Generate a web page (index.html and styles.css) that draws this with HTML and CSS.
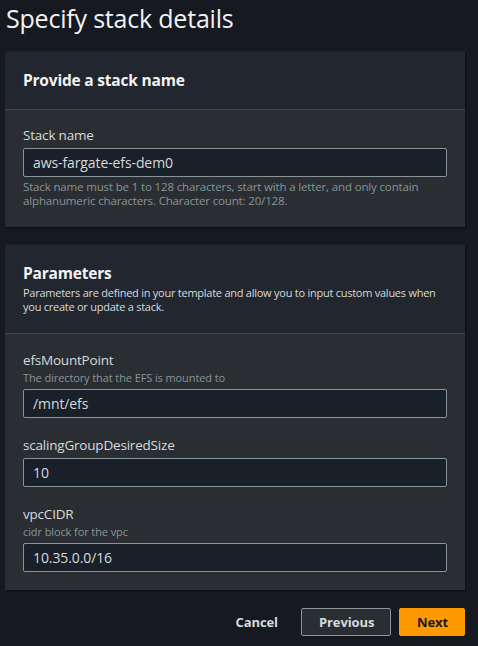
FILE: index.html
```html
<!DOCTYPE html>
<html>
<head>
<meta charset="utf-8">
<link rel="stylesheet" href="styles.css">
</head>
<body>
<div class="page">
  <h1 class="title">Specify stack details</h1>

  <section class="card">
    <div class="card-header">
      <h2 class="card-title">Provide a stack name</h2>
    </div>
    <div class="card-body first">
      <div class="field">
        <label class="label">Stack name</label>
        <div class="input">aws-fargate-efs-dem0</div>
        <p class="constraint">Stack name must be 1 to 128 characters, start with a letter, and only contain alphanumeric characters. Character count: 20/128.</p>
      </div>
    </div>
  </section>

  <section class="card">
    <div class="card-header params">
      <h2 class="card-title">Parameters</h2>
      <p class="card-desc">Parameters are defined in your template and allow you to input custom values when you create or update a stack.</p>
    </div>
    <div class="card-body">
      <div class="field">
        <label class="label">efsMountPoint</label>
        <p class="desc">The directory that the EFS is mounted to</p>
        <div class="input">/mnt/efs</div>
      </div>
      <div class="field">
        <label class="label">scalingGroupDesiredSize</label>
        <div class="input">10</div>
      </div>
      <div class="field">
        <label class="label">vpcCIDR</label>
        <p class="desc">cidr block for the vpc</p>
        <div class="input">10.35.0.0/16</div>
      </div>
    </div>
  </section>

  <div class="actions">
    <button class="btn link">Cancel</button>
    <button class="btn normal">Previous</button>
    <button class="btn primary">Next</button>
  </div>
</div>
</body>
</html>
```

FILE: styles.css
```css
* { box-sizing: border-box; }
html, body {
  margin: 0;
  padding: 0;
  background: #16191f;
}
body {
  font-family: "Open Sans", "Noto Sans", sans-serif;
  color: #d5dbdb;
  width: 478px;
  height: 646px;
  overflow: hidden;
}
.page {
  padding: 0 13px 0 5px;
}
.title {
  margin: 0;
  font-size: 25px;
  font-weight: 400;
  color: #f2f3f3;
  line-height: 36px;
  padding-left: 1px;
  letter-spacing: -0.2px;
}
.card {
  background: #2a2e33;
  margin-top: 16px;
  box-shadow: 0 -1px 0 #1d2127, 1px 1px 1px #0d0f12;
}
.card + .card { margin-top: 18px; }
.card-header {
  background: #22262e;
  padding: 18px 18px 19px;
  border-bottom: 1px solid #414750;
}
.card-title {
  margin: 0;
  font-size: 15.5px;
  font-weight: 700;
  color: #f2f3f3;
  line-height: 20px;
  letter-spacing: -0.2px;
}
.card-desc {
  margin: 3px 0 0;
  font-size: 11px;
  line-height: 14px;
  color: #d5dbdb;
  letter-spacing: -0.25px;
}
.card-body {
  padding: 17px 18px 18px;
  display: flex;
  flex-direction: column;
  gap: 18px;
}
.card-body.first { padding-top: 16px; padding-bottom: 19px; }
.label {
  display: block;
  font-size: 13.5px;
  line-height: 18px;
  color: #d5dbdb;
  letter-spacing: -0.2px;
}
.desc {
  margin: 1px 0 0;
  font-size: 11px;
  line-height: 16px;
  color: #879596;
  letter-spacing: -0.1px;
}
.input {
  margin-top: 3px;
  height: 29px;
  background: #1a2029;
  border: 1px solid #879596;
  border-radius: 2px;
  padding: 0 9px;
  display: flex;
  align-items: center;
  font-size: 14px;
  color: #d5dbdb;
  letter-spacing: -0.1px;
}
.label + .input { margin-top: 4px; }
.constraint {
  margin: 3px 0 0;
  font-size: 11.5px;
  line-height: 14px;
  color: #879596;
  letter-spacing: -0.15px;
}
.actions {
  display: flex;
  justify-content: flex-end;
  align-items: center;
  gap: 8px;
  margin-top: 18px;
}
.btn {
  font-family: inherit;
  font-size: 13px;
  font-weight: 700;
  height: 28px;
  border-radius: 2px;
  padding: 0 17px;
  cursor: pointer;
  letter-spacing: -0.1px;
}
.btn.link {
  background: transparent;
  border: none;
  color: #d5dbdb;
  margin-right: 0;
  padding: 0 15px 0 18px;
}
.btn.normal {
  background: #2a2e33;
  border: 1px solid #879596;
  color: #d5dbdb;
  width: 90px;
}
.btn.primary {
  background: #ff9900;
  border: 1px solid #ff9900;
  color: #16191f;
  width: 66px;
}
```
